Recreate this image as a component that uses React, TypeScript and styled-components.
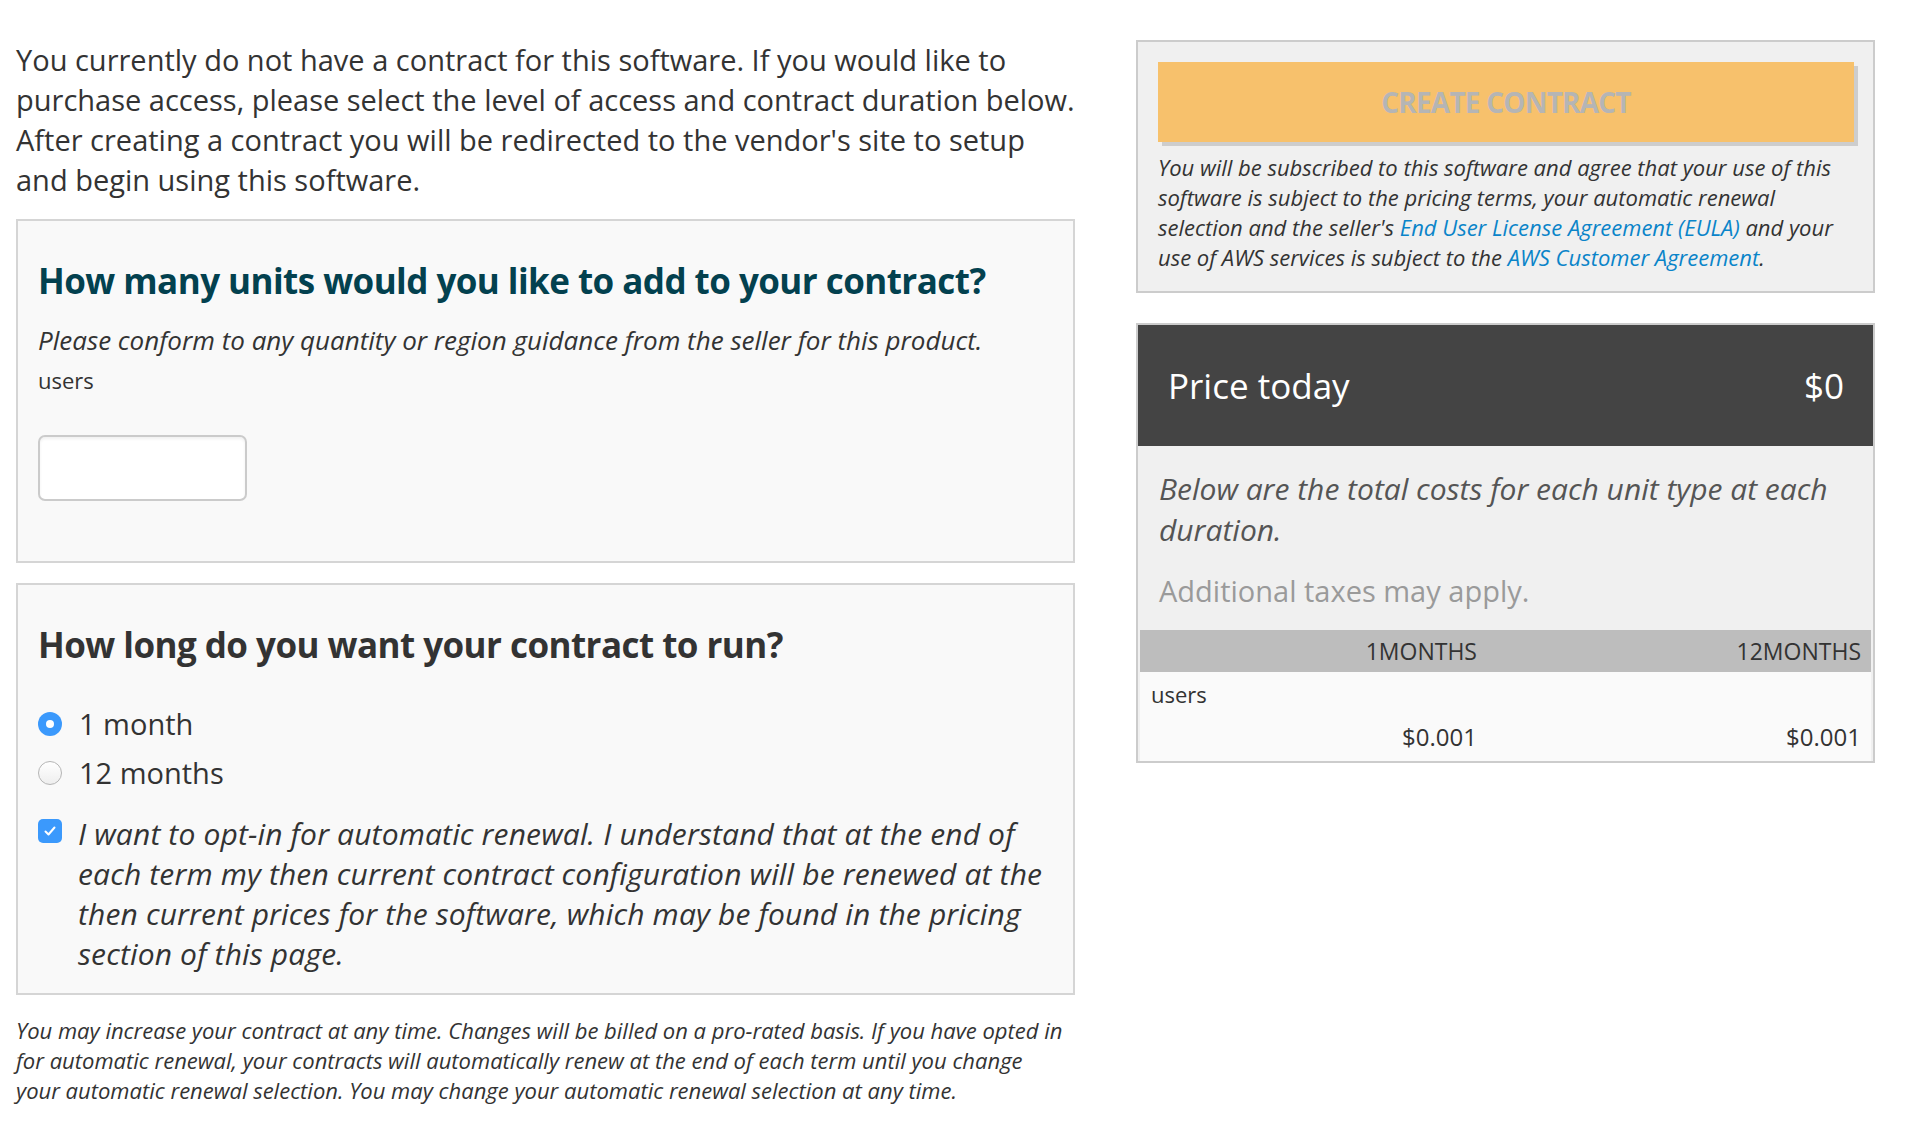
import styled, { createGlobalStyle } from "styled-components";

const GlobalStyle = createGlobalStyle`
  html, body {
    margin: 0;
    padding: 0;
    background: #ffffff;
    font-family: "Open Sans", "Noto Sans", sans-serif;
    color: #333333;
  }
`;

const Page = styled.div`
  display: flex;
  flex-direction: row;
  align-items: flex-start;
  gap: 61px;
  padding: 40px 39px 0 16px;
`;

const LeftColumn = styled.div`
  width: 1059px;
  display: flex;
  flex-direction: column;
`;

const RightColumn = styled.div`
  width: 739px;
  display: flex;
  flex-direction: column;
  gap: 30px;
`;

const Intro = styled.p`
  margin: 0 0 19px 0;
  font-size: 29px;
  line-height: 40px;
  color: #333;
`;

const Panel = styled.section<{ $padBottom: number }>`
  border: 2px solid #d5d5d5;
  background: #f9f9f9;
  padding: 38px 20px ${(p) => p.$padBottom}px 20px;
  display: flex;
  flex-direction: column;
`;

const PanelTitle = styled.h2<{ $tone?: "teal" | "dark" }>`
  margin: 0;
  font-size: 35px;
  line-height: 44px;
  font-weight: 700;
  letter-spacing: -0.55px;
  color: ${(p) => (p.$tone === "teal" ? "#03414f" : "#333")};
`;

const Guidance = styled.p`
  margin: 19px 0 0 0;
  font-size: 26px;
  line-height: 36px;
  font-style: italic;
  color: #333;
`;

const UnitLabel = styled.div`
  margin-top: 7px;
  font-size: 22px;
  line-height: 30px;
  color: #333;
`;

const QuantityInput = styled.input`
  margin-top: 40px;
  width: 209px;
  height: 66px;
  box-sizing: border-box;
  border: 2px solid #cbcbcb;
  border-radius: 7px;
  background: #fff;
  box-shadow: inset 0 2px 3px rgba(0, 0, 0, 0.06);
  outline: none;
`;

const Options = styled.div`
  margin-top: 37px;
  display: flex;
  flex-direction: column;
  gap: 9px;
`;

const OptionRow = styled.label`
  display: flex;
  align-items: center;
  gap: 17px;
  font-size: 29px;
  line-height: 40px;
  color: #333;
`;

const RadioDot = styled.span<{ $checked: boolean }>`
  width: 24px;
  height: 24px;
  border-radius: 50%;
  box-sizing: border-box;
  flex-shrink: 0;
  background: ${(p) =>
    p.$checked ? "#3b99fc" : "linear-gradient(#ffffff, #eeeeee)"};
  border: ${(p) => (p.$checked ? "none" : "1px solid #b5b5b5")};
  display: flex;
  align-items: center;
  justify-content: center;
  &::after {
    content: "";
    display: ${(p) => (p.$checked ? "block" : "none")};
    width: 8px;
    height: 8px;
    border-radius: 50%;
    background: #fff;
  }
`;

const RenewalRow = styled.label`
  margin-top: 21px;
  display: flex;
  align-items: flex-start;
  gap: 16px;
`;

const CheckBox = styled.span`
  margin-top: 5px;
  width: 24px;
  height: 24px;
  border-radius: 5px;
  background: #3b99fc;
  flex-shrink: 0;
  display: flex;
  align-items: center;
  justify-content: center;
`;

const RenewalText = styled.span`
  font-size: 30px;
  line-height: 40px;
  letter-spacing: 0.15px;
  font-style: italic;
  color: #333;
`;

const FinePrint = styled.p`
  margin: 20px 0 0 0;
  padding-right: 6px;
  font-size: 22px;
  line-height: 30px;
  font-style: italic;
  color: #333;
`;

const TermsBox = styled.div`
  border: 2px solid #cccccc;
  background: #f0f0f0;
  padding: 20px 19px 19px 20px;
`;

const CreateButton = styled.button`
  display: block;
  width: 100%;
  height: 80px;
  border: none;
  background: #f7c16c;
  box-shadow: 4px 4px 0 #cdcdcd;
  font-family: inherit;
  font-size: 28px;
  font-weight: 700;
  letter-spacing: -0.8px;
  color: #b5b5b5;
  text-transform: uppercase;
  cursor: default;
`;

const TermsText = styled.p`
  margin: 10px 0 0 0;
  font-size: 22px;
  line-height: 30px;
  font-style: italic;
  color: #333;
`;

const Link = styled.a`
  color: #0a84c9;
  text-decoration: none;
`;

const PriceBox = styled.div`
  border: 2px solid #cccccc;
  background: #f0f0f0;
`;

const PriceHeader = styled.div`
  background: #444444;
  height: 121px;
  padding: 0 29px 0 30px;
  display: flex;
  align-items: center;
  justify-content: space-between;
  color: #ffffff;
  font-size: 35px;
`;

const PriceBody = styled.div`
  padding: 22px 30px 19px 21px;
`;

const PriceNote = styled.p<{ $muted?: boolean }>`
  margin: 0;
  font-size: ${(p) => (p.$muted ? 29 : 30)}px;
  line-height: 41px;
  font-style: ${(p) => (p.$muted ? "normal" : "italic")};
  color: ${(p) => (p.$muted ? "#9a9a9a" : "#555")};
  & + & {
    margin-top: 20px;
  }
`;

const RateTable = styled.div`
  margin: 0 2px;
  display: grid;
  grid-template-columns: 347px 1fr;
  color: #333;
`;

const RateHead = styled.div`
  background: #bdbdbd;
  height: 42px;
  line-height: 42px;
  font-size: 23px;
  text-align: right;
  padding-right: 10px;
  text-transform: uppercase;
`;

const RateCell = styled.div<{ $align?: "left" | "right"; $span?: boolean }>`
  background: #fafafa;
  text-align: ${(p) => p.$align ?? "right"};
  grid-column: ${(p) => (p.$span ? "1 / span 2" : "auto")};
  font-size: ${(p) => (p.$span ? 22 : 24)}px;
  line-height: 30px;
  padding: ${(p) => (p.$span ? "7px 0 0 11px" : "13px 10px 9px 0")};
`;

const Check = () => (
  <svg width="16" height="16" viewBox="0 0 16 16" fill="none">
    <path
      d="M3.5 8.5 L6.5 11.5 L12.5 4.5"
      stroke="#fff"
      strokeWidth="2"
      strokeLinecap="round"
      strokeLinejoin="round"
    />
  </svg>
);

export default function App() {
  return (
    <>
      <GlobalStyle />
      <Page>
        <LeftColumn>
          <Intro>
            You currently do not have a contract for this software. If you would
            like to purchase access, please select the level of access and
            contract duration below. After creating a contract you will be
            redirected to the vendor's site to setup and begin using this
            software.
          </Intro>
          <Panel $padBottom={60}>
            <PanelTitle $tone="teal">
              How many units would you like to add to your contract?
            </PanelTitle>
            <Guidance>
              Please conform to any quantity or region guidance from the seller
              for this product.
            </Guidance>
            <UnitLabel>users</UnitLabel>
            <QuantityInput type="text" />
          </Panel>
          <Panel $padBottom={19} style={{ marginTop: 20 }}>
            <PanelTitle $tone="dark">
              How long do you want your contract to run?
            </PanelTitle>
            <Options>
              <OptionRow>
                <RadioDot $checked />1 month
              </OptionRow>
              <OptionRow>
                <RadioDot $checked={false} />
                12 months
              </OptionRow>
            </Options>
            <RenewalRow>
              <CheckBox>
                <Check />
              </CheckBox>
              <RenewalText>
                I want to opt-in for automatic renewal. I understand that at the
                end of each term my then current contract configuration will be
                renewed at the then current prices for the software, which may
                be found in the pricing section of this page.
              </RenewalText>
            </RenewalRow>
          </Panel>
          <FinePrint>
            You may increase your contract at any time. Changes will be billed
            on a pro-rated basis. If you have opted in for automatic renewal,
            your contracts will automatically renew at the end of each term
            until you change your automatic renewal selection. You may change
            your automatic renewal selection at any time.
          </FinePrint>
        </LeftColumn>
        <RightColumn>
          <TermsBox>
            <CreateButton>Create Contract</CreateButton>
            <TermsText>
              You will be subscribed to this software and agree that your use of
              this software is subject to the pricing terms, your automatic
              renewal selection and the seller's{" "}
              <Link href="#">End User License Agreement (EULA)</Link> and your
              use of AWS services is subject to the{" "}
              <Link href="#">AWS Customer Agreement</Link>.
            </TermsText>
          </TermsBox>
          <PriceBox>
            <PriceHeader>
              <span>Price today</span>
              <span>$0</span>
            </PriceHeader>
            <PriceBody>
              <PriceNote>
                Below are the total costs for each unit type at each duration.
              </PriceNote>
              <PriceNote $muted>Additional taxes may apply.</PriceNote>
            </PriceBody>
            <RateTable>
              <RateHead>1Months</RateHead>
              <RateHead>12Months</RateHead>
              <RateCell $align="left" $span>
                users
              </RateCell>
              <RateCell>$0.001</RateCell>
              <RateCell>$0.001</RateCell>
            </RateTable>
          </PriceBox>
        </RightColumn>
      </Page>
    </>
  );
}
